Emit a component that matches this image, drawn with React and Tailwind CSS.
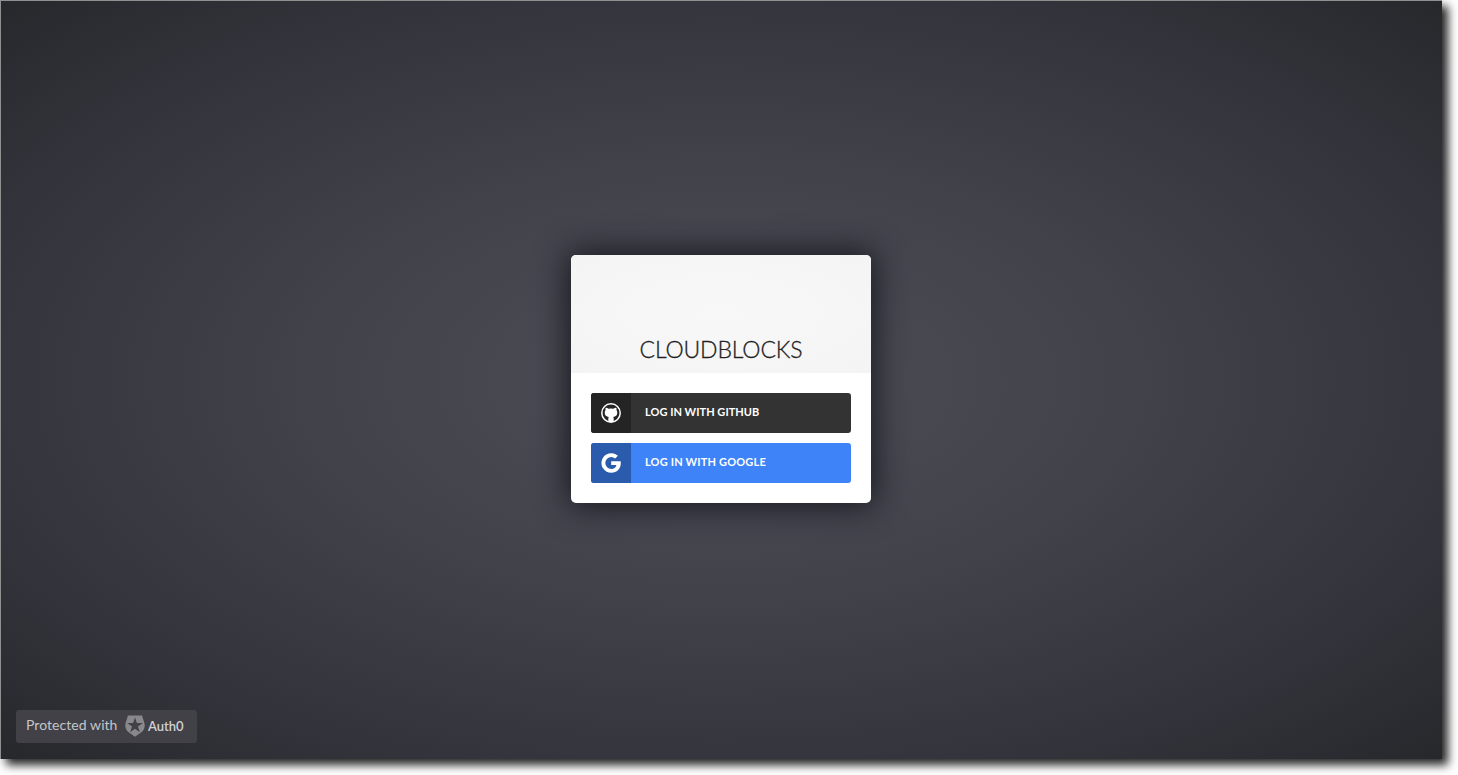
function GithubIcon() {
  return (
    <svg viewBox="0 0 20 20" className="size-5" aria-hidden="true">
      <circle cx="10" cy="10" r="9.2" fill="none" stroke="#fff" strokeWidth="1.5" />
      <path
        fill="#fff"
        d="M4.700 4.700c1-.1 2 .4 2.800 1a10 10 0 0 1 5 0c.8-.6 1.800-1.100 2.800-1 .4.800.4 1.600.1 2.400.6.800.9 1.700.9 2.700 0 2.800-1.500 3.900-4.100 4.200.3.400.5.900.5 1.500V19H7.300v-3.500c0-.6.2-1.100.5-1.500C5.200 13.700 3.700 12.600 3.700 9.800c0-1 .3-1.900.9-2.700-.3-.8-.3-1.600.1-2.400Z"
      />
    </svg>
  );
}

function GoogleIcon() {
  return (
    <svg viewBox="0 0 20 20" className="size-5" aria-hidden="true">
      <path
        fill="#fff"
        d="M10.200 8.200h9.400c.1.600.2 1.200.2 1.900 0 5.700-3.800 9.700-9.500 9.700A9.800 9.800 0 1 1 16.900 2.800L14.100 5.500A5.900 5.900 0 0 0 10.300 4a6 6 0 1 0 0 12c3.500 0 4.900-2.500 5.100-4h-5.200Z"
      />
    </svg>
  );
}

function ShieldIcon() {
  return (
    <svg viewBox="0 0 20 22" className="mb-px h-[22px] w-5 shrink-0" aria-hidden="true">
      <path
        fill="#88888d"
        fillRule="evenodd"
        d="M3 .5h14l2.300 7.200c1.200 3.900-.2 7.600-3.300 9.900L10 21.700l-6-4.100C.9 15.300-.5 11.600.7 7.700ZM10 2.400 8.100 8H2.200l4.800 3.500L5.200 17.200 10 13.700l4.800 3.500L13 11.500 17.800 8h-5.900Z"
      />
    </svg>
  );
}

function LoginButton({ icon, label, className, iconClassName, labelClassName }) {
  return (
    <button className={`flex h-10 w-full overflow-hidden rounded-[3px] text-left ${className}`}>
      <span className={`flex h-10 w-10 items-center justify-center ${iconClassName}`}>{icon}</span>
      <span className={`pl-3.5 text-[11px] leading-[38px] font-bold whitespace-nowrap text-white ${labelClassName}`}>
        {label}
      </span>
    </button>
  );
}

export default function App() {
  return (
    <div className="h-[775px] w-[1458px] overflow-hidden bg-white font-['Lato',sans-serif]">
      <main className="grid h-[759px] w-[1442px] grid-rows-[254px_1fr_49px] border-t border-l border-[#8d9190] bg-[radial-gradient(ellipse_farthest-corner_at_center,#4e4e57_0%,#42424b_40%,#33333b_76%,#27282c_100%)] pb-4 shadow-[6px_6px_9px_rgba(0,0,0,0.85)]">
        <section className="row-start-2 mr-px h-[248px] w-[300px] justify-self-center overflow-hidden rounded-[5px] bg-white shadow-[0_0_32px_3px_rgba(20,20,28,0.95)]">
          <header className="flex h-[118px] items-end justify-center bg-[radial-gradient(ellipse_at_center,#f8f8f8_0%,#f4f4f4_100%)] pb-2">
            <h1 className="text-[23px] leading-8 font-light tracking-[-0.15px] text-[#222] [-webkit-text-stroke:0.3px_#222]">
              CLOUDBLOCKS
            </h1>
          </header>
          <div className="flex flex-col gap-2.5 p-5">
            <LoginButton
              icon={<GithubIcon />}
              label="LOG IN WITH GITHUB"
              className="bg-[#333333]"
              iconClassName="bg-[#242424]"
              labelClassName="tracking-[0.04px]"
            />
            <LoginButton
              icon={<GoogleIcon />}
              label="LOG IN WITH GOOGLE"
              className="bg-[#3e83f8]"
              iconClassName="bg-[#2b5bac]"
              labelClassName="tracking-[0.18px]"
            />
          </div>
        </section>
        <footer className="row-start-3 ml-[15px] flex h-[33px] w-[181px] items-center self-end rounded-[3px] bg-[#414147] pl-2.5">
          <span className="w-[99px] pb-1 text-[14px] tracking-[0.06px] whitespace-nowrap text-[#c5c5c9]">
            Protected with
          </span>
          <ShieldIcon />
          <span className="ml-[3px] text-[13px] font-semibold text-[#d2d2d6]">Auth0</span>
        </footer>
      </main>
    </div>
  );
}
